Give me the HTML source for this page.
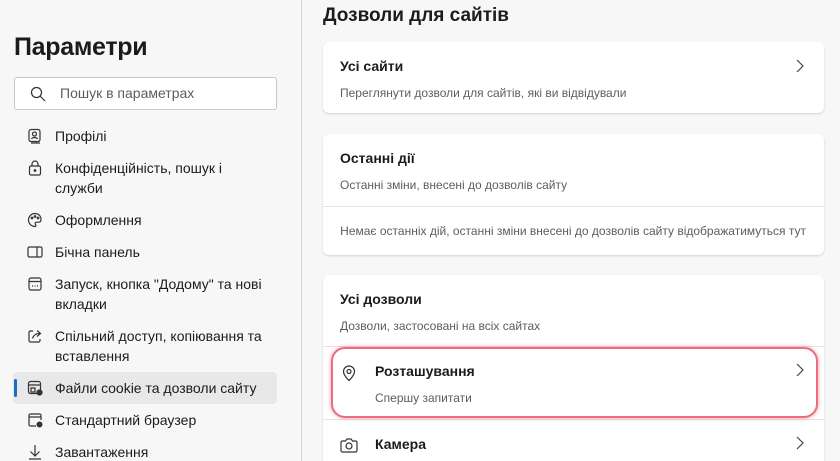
<!DOCTYPE html>
<html><head><meta charset="utf-8"><style>
*{box-sizing:border-box;margin:0;padding:0}
html{width:840px;height:461px;overflow:hidden}
body{width:840px;height:461px;overflow:hidden;background:#f7f7f7;font-family:"Segoe UI","Liberation Sans","DejaVu Sans",sans-serif;color:#1b1b1b;position:relative}
.vl{position:absolute;left:301px;top:0;width:1px;height:461px;background:#d6d6d6}
h1{position:absolute;left:14px;top:33px;font-size:25px;font-weight:600;letter-spacing:-0.3px}
.search{position:absolute;left:14px;top:77px;width:263px;height:33px;border:1px solid #c8c8c8;border-radius:3px;background:#fff}
.search span{position:absolute;left:45px;top:7px;font-size:14px;color:#5d5d5d}
.nav{position:absolute;left:0;font-size:14px;color:#1b1b1b;line-height:20px}
.nav .t{position:absolute;left:55px;width:230px}
.nav svg{position:absolute;left:27px}
.sel{position:absolute;left:13px;top:372px;width:264px;height:32px;background:#e8e8e8;border-radius:4px}
.sel:before{content:"";position:absolute;left:1px;top:7px;width:3px;height:18px;background:#1a6fc1;border-radius:2px}
h2{position:absolute;left:323px;top:5px;font-size:19px;font-weight:600}
.card{position:absolute;left:323px;width:501px;background:#fff;border-radius:6px;box-shadow:0 1px 2px rgba(0,0,0,.15);overflow:hidden}
.tt{position:absolute;font-size:14px;font-weight:600}
.st{position:absolute;font-size:12px;color:#5d5d5d}
.hr{position:absolute;left:0;width:501px;height:1px;background:#e5e5e5}
.chev{position:absolute;right:20px}
</style></head><body>
<div class="vl"></div>
<h1>Параметри</h1>
<div class="search"><svg style="position:absolute;left:15px;top:8px" width="16" height="16" viewBox="0 0 16 16"><circle cx="6.5" cy="6.5" r="5" fill="none" stroke="#333" stroke-width="1.2"/><path d="M10 10l5 5" stroke="#333" stroke-width="1.2"/></svg><span>Пошук в параметрах</span></div>
<div class="sel"></div>
<div class="nav" style="top:126px;width:300px">
<svg style="top:2px" width="16" height="16" viewBox="0 0 16 16" fill="none" stroke="#333" stroke-width="1.2"><rect x="2" y="1.5" width="11" height="12" rx="2"/><circle cx="7.5" cy="6" r="2"/><path d="M4.5 11c1-2 5-2 6 0M4 15h9"/></svg><div class="t" style="top:0">Профілі</div>
<svg style="top:34px" width="16" height="16" viewBox="0 0 16 16" fill="none" stroke="#333" stroke-width="1.2"><rect x="2.5" y="6" width="11" height="9" rx="1.5"/><path d="M5 6V4a3 3 0 016 0v2"/><circle cx="8" cy="10.5" r=".8" fill="#333"/></svg><div class="t" style="top:32px">Конфіденційність, пошук і<br>служби</div>
<svg style="top:86px" width="16" height="16" viewBox="0 0 16 16" fill="none" stroke="#333" stroke-width="1.2"><path d="M8 1.5a6.5 6.5 0 100 13c1 0 1-1.5.3-2.3-.7-.8 0-2 1.2-2h2c1.5 0 2.5-1 2.5-2.7C14 4 11.5 1.5 8 1.5z"/><circle cx="5" cy="6" r=".8"/><circle cx="8" cy="4.5" r=".8"/><circle cx="11" cy="6" r=".8"/></svg><div class="t" style="top:84px">Оформлення</div>
<svg style="top:118px" width="16" height="16" viewBox="0 0 16 16" fill="none" stroke="#333" stroke-width="1.2"><rect x="1" y="3" width="14" height="10" rx="1.5"/><path d="M10 3v10"/></svg><div class="t" style="top:116px">Бічна панель</div>
<svg style="top:150px" width="16" height="16" viewBox="0 0 16 16" fill="none" stroke="#333" stroke-width="1.2"><rect x="2" y="2" width="12" height="12" rx="2"/><path d="M2 5.5h12M5 10h1M7.5 10h1M10 10h1"/></svg><div class="t" style="top:148px">Запуск, кнопка "Додому" та нові<br>вкладки</div>
<svg style="top:202px" width="16" height="16" viewBox="0 0 16 16" fill="none" stroke="#333" stroke-width="1.2"><path d="M6 3H3.5A1.5 1.5 0 002 4.5v8A1.5 1.5 0 003.5 14h8a1.5 1.5 0 001.5-1.5V11"/><path d="M5.5 10.5c1-3.5 3.5-5 7-5M10 2.5l3.5 3-3.5 3"/></svg><div class="t" style="top:200px">Спільний доступ, копіювання та<br>вставлення</div>
<svg style="top:254px" width="16" height="16" viewBox="0 0 16 16" fill="none" stroke="#333" stroke-width="1.2"><rect x="1.5" y="1.5" width="12" height="12" rx="2"/><path d="M1.5 5h12M4 8h4v4H4z"/><circle cx="12.5" cy="12.5" r="2.5" fill="#333"/></svg><div class="t" style="top:252px">Файли cookie та дозволи сайту</div>
<svg style="top:286px" width="16" height="16" viewBox="0 0 16 16" fill="none" stroke="#333" stroke-width="1.2"><path d="M9 14H3.5A1.5 1.5 0 012 12.5v-9A1.5 1.5 0 013.5 2h9A1.5 1.5 0 0114 3.5V8M2 5h12"/><circle cx="12.5" cy="12.5" r="3" fill="#333" stroke="none"/></svg><div class="t" style="top:284px">Стандартний браузер</div>
<svg style="top:318px" width="16" height="16" viewBox="0 0 16 16" fill="none" stroke="#333" stroke-width="1.2"><path d="M8 1v11M3.5 7.5L8 12l4.5-4.5M2 15h12"/></svg><div class="t" style="top:316px">Завантаження</div>
</div>
<h2>Дозволи для сайтів</h2>
<div class="card" style="top:42px;height:71px">
<div class="tt" style="left:17px;top:16px">Усі сайти</div>
<svg class="chev" style="top:17px" width="8" height="14" viewBox="0 0 8 14"><path d="M1 1l6 6-6 6" fill="none" stroke="#444" stroke-width="1.2"/></svg>
<div class="st" style="left:17px;top:44px">Переглянути дозволи для сайтів, які ви відвідували</div>
</div>
<div class="card" style="top:134px;height:121px">
<div class="tt" style="left:17px;top:16px">Останні дії</div>
<div class="st" style="left:17px;top:44px">Останні зміни, внесені до дозволів сайту</div>
<div class="hr" style="top:72px"></div>
<div class="st" style="right:18px;top:90px">Немає останніх дій, останні зміни внесені до дозволів сайту відображатимуться тут</div>
</div>
<div class="card" style="top:275px;height:200px">
<div class="tt" style="left:17px;top:16px">Усі дозволи</div>
<div class="st" style="left:17px;top:44px">Дозволи, застосовані на всіх сайтах</div>
<div class="hr" style="top:71px"></div>
<div class="hr" style="top:144px"></div>
<div class="tt" style="left:52px;top:88px">Розташування</div>
<div class="st" style="left:52px;top:116px">Спершу запитати</div>
<svg style="position:absolute;left:18px;top:89px" width="16" height="18" viewBox="0 0 16 18" fill="none" stroke="#333" stroke-width="1.2"><path d="M8 16.5s-5.5-5-5.5-9a5.5 5.5 0 0111 0c0 4-5.5 9-5.5 9z"/><circle cx="8" cy="7.5" r="2"/></svg>
<svg class="chev" style="top:88px" width="8" height="14" viewBox="0 0 8 14"><path d="M1 1l6 6-6 6" fill="none" stroke="#444" stroke-width="1.2"/></svg>
<div class="tt" style="left:52px;top:161px">Камера</div>
<svg style="position:absolute;left:17px;top:162px" width="18" height="16" viewBox="0 0 18 16" fill="none" stroke="#333" stroke-width="1.2"><path d="M2.5 4h3l1.5-2h4l1.5 2h3A1.5 1.5 0 0117 5.5v8a1.5 1.5 0 01-1.5 1.5h-13A1.5 1.5 0 011 13.5v-8A1.5 1.5 0 012.5 4z"/><circle cx="9" cy="9" r="3"/></svg>
<svg class="chev" style="top:161px" width="8" height="14" viewBox="0 0 8 14"><path d="M1 1l6 6-6 6" fill="none" stroke="#444" stroke-width="1.2"/></svg>
</div>
<div style="position:absolute;left:331px;top:347px;width:487px;height:71px;border:2px solid rgba(230,60,80,.75);border-radius:14px;box-shadow:0 0 4px rgba(230,60,80,.5)"></div>
</body></html>
